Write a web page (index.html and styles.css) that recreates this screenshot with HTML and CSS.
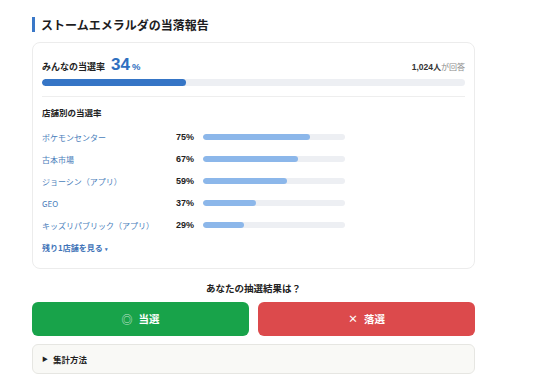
FILE: index.html
```html
<!DOCTYPE html>
<html lang="ja">
<head>
<meta charset="utf-8">
<link rel="stylesheet" href="styles.css">
</head>
<body>
<div class="wrap">
  <h2 class="title">ストームエメラルダの当落報告</h2>
  <div class="card">
    <div class="summary">
      <span class="sum-label">みんなの当選率</span>
      <span class="sum-num">34</span><span class="sum-pct">%</span>
      <span class="sum-count"><b><span class="num">1,024</span>人</b>が回答</span>
    </div>
    <div class="bar main"><div class="fill" style="width:34%"></div></div>
    <div class="divider"></div>
    <div class="sub">店舗別の当選率</div>
    <div class="rows">
      <div class="row"><span class="store">ポケモンセンター</span><span class="pct">75%</span><div class="bar small"><div class="fill" style="width:75%"></div></div></div>
      <div class="row"><span class="store">古本市場</span><span class="pct">67%</span><div class="bar small"><div class="fill" style="width:67%"></div></div></div>
      <div class="row"><span class="store">ジョーシン（アプリ）</span><span class="pct">59%</span><div class="bar small"><div class="fill" style="width:59%"></div></div></div>
      <div class="row"><span class="store">GEO</span><span class="pct">37%</span><div class="bar small"><div class="fill" style="width:37%"></div></div></div>
      <div class="row"><span class="store">キッズリパブリック（アプリ）</span><span class="pct">29%</span><div class="bar small"><div class="fill" style="width:29%"></div></div></div>
    </div>
    <div class="more">残り1店舗を見る <span class="caret">▾</span></div>
  </div>
  <div class="question">あなたの抽選結果は？</div>
  <div class="buttons">
    <button class="btn win"><span class="mark">◎</span><span>当選</span></button>
    <button class="btn lose"><span class="mark-x">×</span><span>落選</span></button>
  </div>
  <details class="method">
    <summary><span class="tri">▶</span><span>集計方法</span></summary>
  </details>
</div>
</body>
</html>
```

FILE: styles.css
```css
* { box-sizing: border-box; }
body {
  margin: 0;
  background: #ffffff;
  font-family: "Noto Sans CJK JP", "Noto Sans", sans-serif;
  color: #222;
}
.wrap {
  width: 443px;
  margin-left: 32px;
  padding-top: 17px;
}
.title {
  margin: 0;
  font-size: 12px;
  line-height: 15px;
  font-weight: 700;
  border-left: 3px solid #3a78c8;
  padding-left: 6px;
  color: #1d1d1f;
}
.card {
  margin-top: 10px;
  border: 1px solid #ececec;
  border-radius: 8px;
  padding: 12px 9px 12px 9px;
}
.summary {
  display: flex;
  align-items: baseline;
  height: 20px;
}
.sum-label {
  font-size: 9px;
  font-weight: 700;
  color: #222;
}
.sum-num {
  margin-left: 6px;
  font-family: "Liberation Sans", Arial, sans-serif;
  font-size: 17px;
  font-weight: 700;
  color: #2f6fc0;
  line-height: 20px;
}
.sum-pct {
  margin-left: 2px;
  font-family: "Liberation Sans", Arial, sans-serif;
  font-size: 9.5px;
  font-weight: 700;
  color: #2f6fc0;
}
.sum-count {
  margin-left: auto;
  font-size: 8px;
  color: #8a8a8a;
}
.sum-count b { color: #333; font-weight: 700; }
.num { font-family: "Liberation Sans", Arial, sans-serif; font-size: 8.5px; }
.bar {
  background: #edeff3;
  border-radius: 4px;
  overflow: hidden;
}
.bar .fill { height: 100%; border-radius: 4px; }
.bar.main { height: 7px; margin-top: 4px; }
.bar.main .fill { background: #3575c6; }
.divider {
  margin-top: 10px;
  height: 1px;
  background: #eeeeee;
}
.sub {
  margin-top: 8px;
  font-size: 8.5px;
  line-height: 14px;
  font-weight: 700;
  color: #222;
}
.rows { margin-top: 7px; }
.row {
  display: grid;
  grid-template-columns: 134px 27px 142px;
  align-items: center;
  height: 22px;
}
.store {
  font-size: 8px;
  color: #4a7ebb;
}
.pct {
  font-family: "Liberation Sans", Arial, sans-serif;
  font-size: 9px;
  font-weight: 700;
  color: #222;
}
.bar.small { height: 6px; }
.bar.small .fill { background: #8cb7ea; }
.more {
  margin-top: 5px;
  font-size: 8px;
  line-height: 14px;
  font-weight: 700;
  color: #3f74b8;
}
.caret { font-size: 5px; vertical-align: middle; }
.question {
  margin-top: 12px;
  text-align: center;
  font-size: 9.5px;
  line-height: 14px;
  font-weight: 700;
  color: #222;
}
.buttons {
  margin-top: 7px;
  display: grid;
  grid-template-columns: 1fr 1fr;
  gap: 9px;
}
.btn {
  height: 34px;
  border: none;
  border-radius: 6px;
  color: #fff;
  font-family: "Noto Sans CJK JP", sans-serif;
  font-size: 10.5px;
  font-weight: 700;
  display: flex;
  align-items: center;
  justify-content: center;
  gap: 6px;
}
.btn.win { background: #18a34a; }
.btn.lose { background: #dc4a4c; }
.mark { color: rgba(255,255,255,0.7); font-size: 11px; }
.mark-x { font-size: 10px; }
.method {
  margin-top: 8px;
  height: 30px;
  border: 1px solid #e6e6e2;
  border-radius: 6px;
  background: #f9f9f6;
}
.method summary {
  list-style: none;
  height: 28px;
  display: flex;
  align-items: center;
  padding-left: 9px;
  font-size: 8.5px;
  font-weight: 700;
  color: #222;
  gap: 5px;
}
.method summary::-webkit-details-marker { display: none; }
.tri { font-size: 6px; }
```
